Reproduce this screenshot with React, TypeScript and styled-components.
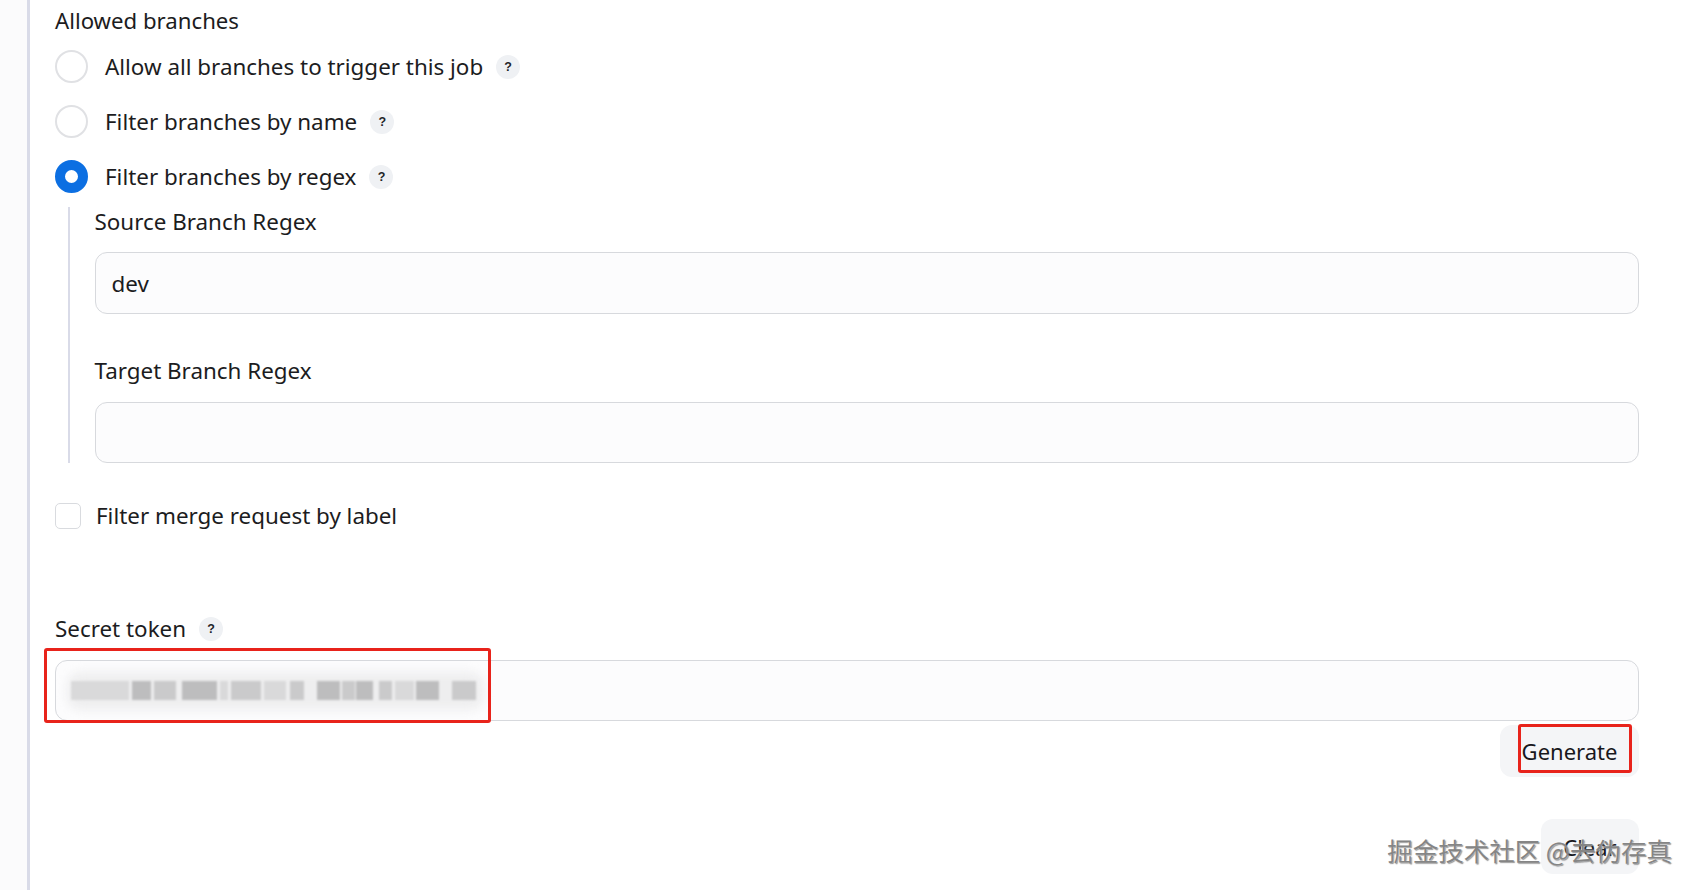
import React from 'react';
import styled, {createGlobalStyle} from 'styled-components';

const GlobalStyle = createGlobalStyle`
  html, body {
    margin: 0;
    background: #ffffff;
  }
  body {
    font-family: "Noto Sans", "Open Sans", "Noto Sans CJK SC", sans-serif;
    color: #1c1c21;
  }
`

const Page = styled.div`
  position: relative;
  display: flex;
  height: 890px;
  overflow: hidden;
`

const Gutter = styled.div`
  width: 27px;
  flex-shrink: 0;
  background: #fbfbfc;
  border-right: 3px solid #d9dbe8;
`

const Main = styled.div`
  flex: 1;
  display: flex;
  flex-direction: column;
  padding: 6px 57px 0 25px;
`

const SectionTitle = styled.div`
  font-size: 22.2px;
  line-height: 30px;
`

const RadioList = styled.div`
  display: flex;
  flex-direction: column;
  margin-top: 3px;
`

const RadioRow = styled.label`
  display: flex;
  align-items: center;
  height: 55px;
`

const RadioDot = styled.span<{ $checked?: boolean }>`
  box-sizing: border-box;
  width: 33px;
  height: 33px;
  flex-shrink: 0;
  border-radius: 50%;
  background: #ffffff;
  border: ${({$checked}) => $checked ? '10px solid #0c6fe2' : '2.5px solid #e0e1e4'};
`

const OptionText = styled.span<{ $gap: number }>`
  margin-left: ${({$gap}) => $gap}px;
  font-size: 22.4px;
  line-height: 30px;
`

const HelpBadge = styled.span`
  display: inline-flex;
  align-items: center;
  justify-content: center;
  width: 24px;
  height: 24px;
  margin-left: 13px;
  border-radius: 50%;
  background: #eff1f4;
  color: #222428;
  font-size: 12.5px;
  font-weight: 700;
  font-family: "Liberation Sans", sans-serif;
`

const Nested = styled.div`
  margin: 3px 0 0 13px;
  padding-left: 24.5px;
  border-left: 2.5px solid #d9dbe8;
  display: flex;
  flex-direction: column;
`

const FieldLabel = styled.div<{ $top?: number }>`
  display: flex;
  align-items: center;
  margin-top: ${({$top}) => $top ?? 0}px;
  font-size: 22.4px;
  line-height: 30px;
`

const TextBox = styled.div<{ $top: number; $h: number }>`
  box-sizing: border-box;
  position: relative;
  display: flex;
  align-items: center;
  height: ${({$h}) => $h}px;
  margin-top: ${({$top}) => $top}px;
  padding: 0 16px;
  border: 1.5px solid #d7d9dd;
  border-radius: 12px;
  background: #fcfcfd;
  font-size: 22.4px;
`

const CheckRow = styled.label`
  display: flex;
  align-items: center;
  height: 40px;
  margin-top: 33px;
`

const CheckBox = styled.span`
  box-sizing: border-box;
  width: 26px;
  height: 26px;
  flex-shrink: 0;
  border: 1.5px solid #d9dbdf;
  border-radius: 5px;
  background: #ffffff;
`

const Mosaic = styled.div`
  position: relative;
  display: flex;
  align-items: center;
  height: 20px;
  margin-left: -1.5px;
  filter: blur(1.2px);

  &::before {
    content: "";
    position: absolute;
    left: -4px;
    right: -8px;
    top: -9px;
    bottom: -9px;
    border-radius: 14px;
    background: #eeeeef;
    filter: blur(5px);
  }
`

const Tile = styled.span<{ $gap: number; $w: number; $tone: string }>`
  position: relative;
  display: block;
  height: 19px;
  margin-left: ${({$gap}) => $gap}px;
  width: ${({$w}) => $w}px;
  background: ${({$tone}) => $tone};
`

const Marker = styled.div<{ $l: number; $t: number; $w: number; $h: number }>`
  position: absolute;
  left: ${({$l}) => $l}px;
  top: ${({$t}) => $t}px;
  width: ${({$w}) => $w}px;
  height: ${({$h}) => $h}px;
  box-sizing: border-box;
  border: 3px solid #e8231b;
  border-radius: 3px;
  pointer-events: none;
`

const ButtonRow = styled.div<{ $top: number }>`
  display: flex;
  justify-content: flex-end;
  margin-top: ${({$top}) => $top}px;
`

const Button = styled.button<{ $w: number; $h: number }>`
  position: relative;
  width: ${({$w}) => $w}px;
  height: ${({$h}) => $h}px;
  border: none;
  border-radius: 12px;
  background: #f4f5f7;
  color: #18181c;
  font-family: inherit;
  font-size: 22px;
  padding: 0;
`

const Watermark = styled.div`
  position: absolute;
  right: 24px;
  bottom: 25px;
  font-family: "Noto Sans CJK SC", "Noto Sans", sans-serif;
  font-size: 25.5px;
  line-height: 30px;
  color: #858585;
  text-shadow: 0 0 2px #ffffff, 1px 1px 1px rgba(0, 0, 0, 0.5);
  white-space: nowrap;
`

const lightGray = '#d9d9da'
const midGray = '#cacacb'
const darkGray = '#bdbdbe'

// [gap before, width, tone] of each pixel block in the masked token
const tokenTiles: [number, number, string][] = [
    [0, 58, lightGray], [3, 19, darkGray], [3, 22, midGray], [6, 35, darkGray],
    [3, 8, lightGray], [3, 30, midGray], [3, 22, lightGray], [4, 14, midGray],
    [13, 23, darkGray], [2, 13, midGray], [1, 17, darkGray], [6, 13, midGray],
    [3, 19, lightGray], [2, 23, darkGray], [13, 24, midGray],
]

const branchOptions = [
    {text: 'Allow all branches to trigger this job', checked: false},
    {text: 'Filter branches by name', checked: false},
    {text: 'Filter branches by regex', checked: true},
]

export default function App() {
    return <>
        <GlobalStyle/>
        <Page>
            <Gutter/>
            <Main>
                <SectionTitle>Allowed branches</SectionTitle>
                <RadioList>
                    {branchOptions.map(o => (
                        <RadioRow key={o.text}>
                            <RadioDot $checked={o.checked}/>
                            <OptionText $gap={17}>{o.text}</OptionText>
                            <HelpBadge>?</HelpBadge>
                        </RadioRow>
                    ))}
                </RadioList>
                <Nested>
                    <FieldLabel>Source Branch Regex</FieldLabel>
                    <TextBox $top={15} $h={62}>dev</TextBox>
                    <FieldLabel $top={42}>Target Branch Regex</FieldLabel>
                    <TextBox $top={16} $h={61}/>
                </Nested>
                <CheckRow>
                    <CheckBox/>
                    <OptionText $gap={15}>Filter merge request by label</OptionText>
                </CheckRow>
                <FieldLabel $top={78}>
                    Secret token
                    <HelpBadge>?</HelpBadge>
                </FieldLabel>
                <TextBox $top={16} $h={61}>
                    <Mosaic>
                        {tokenTiles.map(([gap, w, tone], i) => (
                            <Tile key={i} $gap={gap} $w={w} $tone={tone}/>
                        ))}
                    </Mosaic>
                    <Marker $l={-12.5} $t={-13.5} $w={447} $h={75}/>
                </TextBox>
                <ButtonRow $top={4}>
                    <Button $w={139} $h={52}>
                        Generate
                        <Marker $l={17.5} $t={-1} $w={114} $h={49}/>
                    </Button>
                </ButtonRow>
                <ButtonRow $top={42}>
                    <Button $w={98} $h={55}>Clear</Button>
                </ButtonRow>
            </Main>
            <Watermark>掘金技术社区 @去伪存真</Watermark>
        </Page>
    </>
}
